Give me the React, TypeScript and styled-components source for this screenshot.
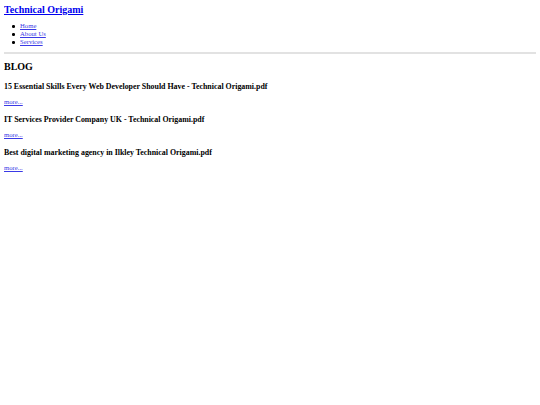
import * as React from 'react';
import styled, { createGlobalStyle } from 'styled-components';

// =========================
// Global
// =========================

const GlobalStyle = createGlobalStyle`
  html, body {
    background: #ffffff;
  }

  body {
    margin: 4px;
    font-family: "Liberation Serif", "Times New Roman", serif;
    font-size: 6.7px;
    color: #000000;
  }
`;

// =========================
// Styled components
// =========================

// block flow on purpose: the vertical margins between posts collapse like a plain page
const Page = styled.div`
  display: block;
`;

const SiteTitle = styled.h2`
  margin: 0 0 6px;
  font-size: 10px;
  line-height: 12px;
  font-weight: bold;
`;

const Link = styled.a<{ $small?: boolean }>`
  color: ${({ $small }) => ($small ? '#3a3ae6' : '#0000ee')};
  text-decoration: underline;
`;

const NavList = styled.ul`
  margin: 0;
  padding-left: 16px;
  list-style: none;
`;

const NavItem = styled.li`
  position: relative;
  font-size: 6.7px;
  line-height: 8px;

  /* disc bullet sits closer to the text than the default marker */
  &::before {
    content: '';
    position: absolute;
    left: -8px;
    top: 3px;
    width: 2.5px;
    height: 2.5px;
    border-radius: 50%;
    background: #000000;
  }
`;

const Rule = styled.hr`
  margin: 6px 0 7px;
  height: 0;
  border: none;
  border-top: 2px solid #e2e2e2;
`;

const SectionTitle = styled.h2`
  margin: 0;
  font-size: 10px;
  line-height: 12px;
  font-weight: bold;
`;

const PostTitle = styled.h3`
  margin: 8.5px 0 7.5px;
  font-size: 7.9px;
  line-height: 9px;
  font-weight: bold;
`;

const MoreLine = styled.p`
  margin: 7.5px 0;
  font-size: 6.7px;
  line-height: 8px;
`;

// =========================
// Data
// =========================

const navLinks = ['Home', 'About Us', 'Services'];

const posts = [
  '15 Essential Skills Every Web Developer Should Have - Technical Origami.pdf',
  'IT Services Provider Company UK - Technical Origami.pdf',
  'Best digital marketing agency in Ilkley Technical Origami.pdf',
];

// =========================
// Component
// =========================

const App = () => (
  <>
    <GlobalStyle />
    <Page>
      <SiteTitle>
        <Link href="#">Technical Origami</Link>
      </SiteTitle>
      <NavList>
        {navLinks.map((label) => (
          <NavItem key={label}>
            <Link href="#" $small>{label}</Link>
          </NavItem>
        ))}
      </NavList>
      <Rule />
      <SectionTitle>BLOG</SectionTitle>
      {posts.map((title) => (
        <React.Fragment key={title}>
          <PostTitle>{title}</PostTitle>
          <MoreLine>
            <Link href="#" $small>more...</Link>
          </MoreLine>
        </React.Fragment>
      ))}
    </Page>
  </>
);

export default App;
